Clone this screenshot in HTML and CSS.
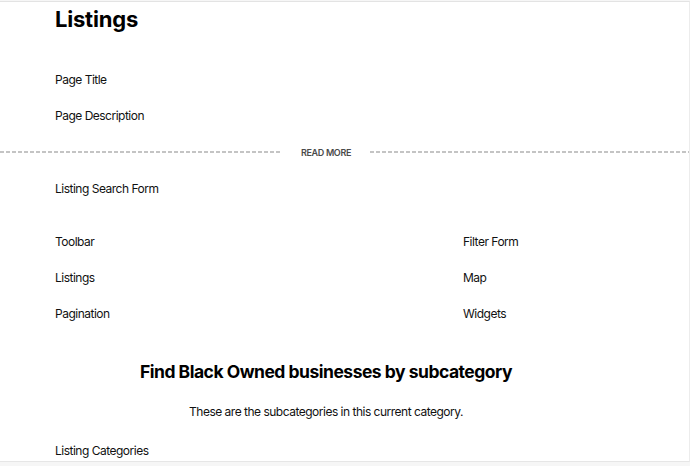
FILE: index.html
```html
<!DOCTYPE html>
<html lang="en">
<head>
<meta charset="utf-8">
<title>Listings</title>
<link rel="stylesheet" href="styles.css">
</head>
<body>
<div class="frame">
  <div class="container">
    <h1 class="page-heading">Listings</h1>
    <div class="row first">Page Title</div>
    <div class="row">Page Description</div>
  </div>
  <div class="read-more">
    <span class="dash dash-left"></span>
    <span class="read-more-label">READ MORE</span>
    <span class="dash"></span>
  </div>
  <div class="container">
    <div class="row">Listing Search Form</div>
    <div class="columns">
      <div class="col">
        <div class="row">Toolbar</div>
        <div class="row">Listings</div>
        <div class="row">Pagination</div>
      </div>
      <div class="col">
        <div class="row">Filter Form</div>
        <div class="row">Map</div>
        <div class="row">Widgets</div>
      </div>
    </div>
    <h2 class="sub-heading">Find Black Owned businesses by subcategory</h2>
    <p class="sub-text">These are the subcategories in this current category.</p>
    <div class="row last">Listing Categories</div>
  </div>
</div>
<div class="footer-strip"></div>
</body>
</html>
```

FILE: styles.css
```css
* { box-sizing: border-box; }

html, body {
  margin: 0;
  padding: 0;
  background: #f6f6f6;
}

body {
  font-family: Inter, "Noto Sans", Arial, sans-serif;
  color: #111;
  padding-top: 1px;
}

.frame {
  background: #fff;
  border-top: 1px solid #e3e3e3;
  border-right: 1px solid #ececec;
  border-bottom: 1px solid #e6e6e6;
  height: 461px;
  overflow: hidden;
}

.container {
  width: 542px;
  margin-left: 55px;
}

.page-heading {
  margin: 3px 0 0 0;
  font-size: 22px;
  line-height: 28px;
  font-weight: 700;
  color: #000;
  letter-spacing: -0.2px;
}

.row {
  height: 36px;
  line-height: 36px;
  font-size: 12px;
  letter-spacing: -0.5px;
  color: #111;
}

.row.first { margin-top: 29px; }

.read-more {
  display: flex;
  align-items: center;
  height: 36px;
  margin-bottom: 1px;
}

.dash {
  flex: 1;
  height: 2px;
  background: repeating-linear-gradient(to right, #c4c4c4 0 4px, transparent 4px 6px);
}

.dash-left {
  flex: 0 0 281px;
}

.read-more-label {
  font-size: 9px;
  font-weight: 600;
  color: #4a4a4a;
  padding: 0 19px 0 20px;
  letter-spacing: -0.35px;
}

.columns {
  display: grid;
  grid-template-columns: 408px 1fr;
  margin-top: 17px;
}

.sub-heading {
  margin: 22px 0 0 0;
  height: 36px;
  line-height: 36px;
  font-size: 17.5px;
  letter-spacing: -0.5px;
  font-weight: 700;
  text-align: center;
  color: #000;
}

.sub-text {
  margin: 4px 0 0 0;
  height: 36px;
  line-height: 36px;
  font-size: 12px;
  letter-spacing: -0.5px;
  text-align: center;
}

.row.last {
  margin-top: 10px;
  height: 21px;
  line-height: 21px;
}

.footer-strip {
  height: 4px;
  background: #f6f6f6;
}
```
